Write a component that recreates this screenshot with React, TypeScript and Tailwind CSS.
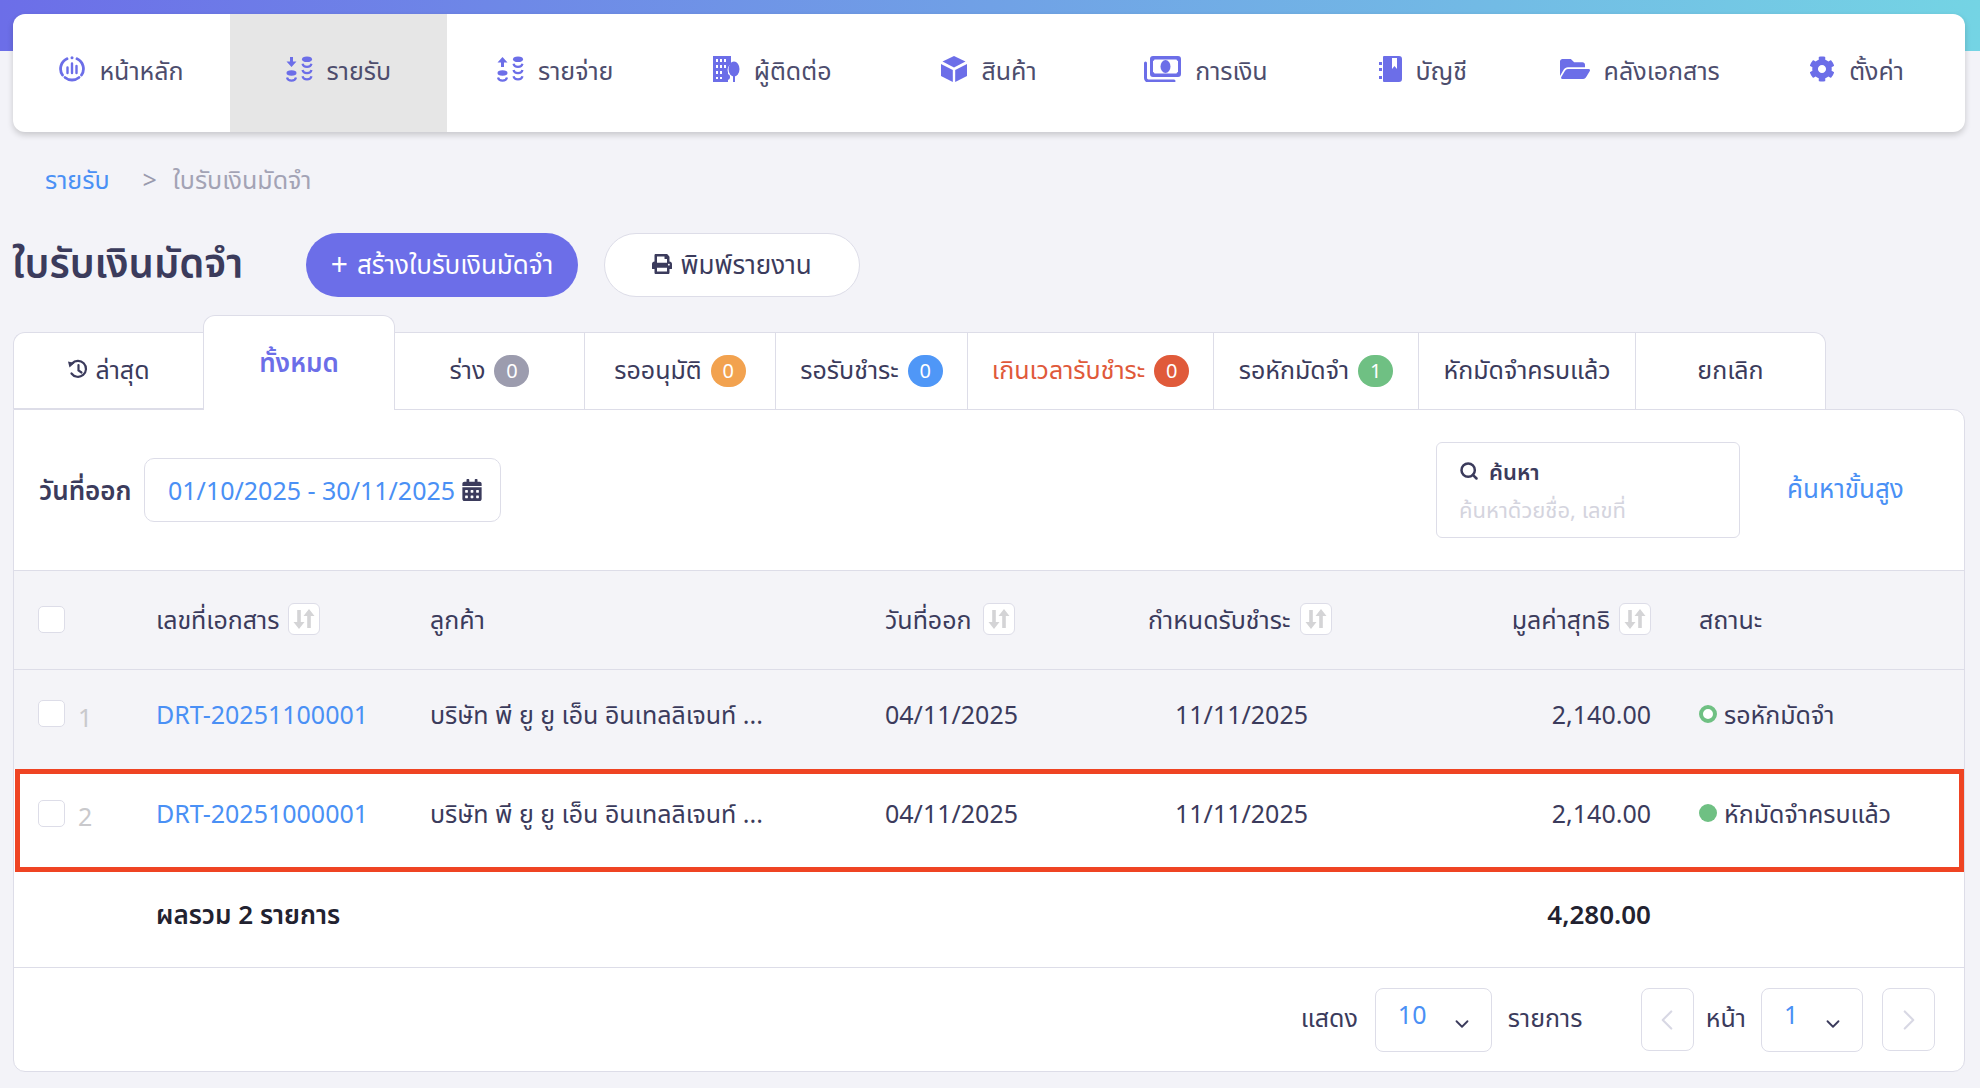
import React from "react";
import { FaFolderOpen, FaCog, FaPrint, FaCalendarAlt } from "react-icons/fa";
import { Search, ChevronDown, ChevronLeft, ChevronRight } from "lucide-react";

const FONT = "font-['Noto_Sans','Noto_Sans_Thai',sans-serif]";

function HomeIcon() {
  return (
    <svg width="26" height="26" viewBox="0 0 26 26" fill="none">
      <path d="M8 2.800A11 11 0 0 0 3.500 19" stroke="#6c6ee8" strokeWidth="2.800" strokeLinecap="round" />
      <path d="M18 2.800A11 11 0 0 1 22.500 19" stroke="#6c6ee8" strokeWidth="2.800" strokeLinecap="round" />
      <path d="M6 21.500A11 11 0 0 0 20 21.500" stroke="#6c6ee8" strokeWidth="2.800" strokeLinecap="round" />
      <circle cx="13" cy="1.800" r="1.500" fill="#6c6ee8" />
      <path d="M8.500 11.500v5.500M13 7.500v9.500M17.500 10v7" stroke="#6c6ee8" strokeWidth="2.400" strokeLinecap="round" />
    </svg>
  );
}
function Coins({ up }: { up?: boolean }) {
  const arc = (x: number, y: number) => (
    <path key={`${x}-${y}`} d={`M${x - 4.5} ${y}c1 4.200 8 4.200 9 0`} stroke="#6c6ee8" strokeWidth="2.200" fill="none" />
  );
  return (
    <svg width="27" height="26" viewBox="0 0 27 26">
      {up ? <path d="M5.500 1l5 5.500H7V11H4V6.500H.5z" fill="#6c6ee8" /> : <path d="M5.500 11L.5 5.500H4V1h3v4.500h3.500z" fill="#6c6ee8" />}
      <ellipse cx="5.500" cy="17" rx="5" ry="2.800" fill="#6c6ee8" />
      {arc(5.5, 21.5)}
      <ellipse cx="21" cy="3.200" rx="5" ry="2.800" fill="#6c6ee8" />
      {arc(21, 7.8)}
      {arc(21, 14)}
      {arc(21, 20.3)}
    </svg>
  );
}
function CubeIcon() {
  return (
    <svg width="26" height="26" viewBox="0 0 26 26" fill="#6c6ee8">
      <path d="M13 0l11.500 5.500L13 11.500 1.500 5.500z" />
      <path d="M0 8l11.800 6v12L0 20z" />
      <path d="M26 8l-11.800 6v12L26 20z" />
    </svg>
  );
}
function ContactIcon() {
  return (
    <svg width="27" height="26" viewBox="0 0 27 26">
      <path fillRule="evenodd" d="M0 0h18v8a7 7 0 0 0-3 8.500V26H0zM3 3v3h2V3zm4 0v3h2V3zm4 0v3h2V3zM3 9v3h2V9zm4 0v3h2V9zm4 0v3h2V9zM3 15v3h2v-3zm4 0v3h2v-3zM3 21v2h2v-2zm4 0v2h2v-2z" fill="#6c6ee8" />
      <ellipse cx="21" cy="13" rx="5.500" ry="7.500" fill="#6c6ee8" />
      <rect x="20" y="18" width="2" height="8" fill="#6c6ee8" />
      <circle cx="14" cy="21" r="3" fill="#6c6ee8" />
      <rect x="13.300" y="22" width="1.400" height="4" fill="#6c6ee8" />
    </svg>
  );
}
function MoneyIcon() {
  return (
    <svg width="37" height="26" viewBox="0 0 37 26">
      <path d="M1.500 7v15a3 3 0 0 0 3 3H30" stroke="#6c6ee8" strokeWidth="3" fill="none" strokeLinecap="round" />
      <path fillRule="evenodd" d="M9 0h25a3 3 0 0 1 3 3v15a3 3 0 0 1-3 3H9a3 3 0 0 1-3-3V3a3 3 0 0 1 3-3zm1.500 3.500a2 2 0 0 1-1.500 1.500v11a2 2 0 0 1 1.500 1.500H32.500A2 2 0 0 1 34 16V5a2 2 0 0 1-1.500-1.500z" fill="#6c6ee8" />
      <ellipse cx="21.500" cy="10.500" rx="5" ry="6.500" fill="#6c6ee8" />
    </svg>
  );
}
function BookIcon() {
  return (
    <svg width="23" height="26" viewBox="0 0 23 26">
      <path fillRule="evenodd" d="M5 0h15a3 3 0 0 1 3 3v20a3 3 0 0 1-3 3H5a1 1 0 0 1-1-1V1a1 1 0 0 1 1-1zm8 2v11l2.500-3 2.500 3V2z" fill="#6c6ee8" />
      <path d="M0 6h3v3H0zM0 12h3v3H0zM0 20h3v3H0z" fill="#6c6ee8" />
    </svg>
  );
}
function HistoryIcon() {
  return (
    <svg width="22" height="22" viewBox="0 0 22 22" fill="none" stroke="#3b3b5c" strokeWidth="2.200">
      <path d="M5 5.500A8 8 0 1 1 4.500 15.500" strokeLinecap="round" />
      <path d="M1 3.500l6.500 1.500-5 4.500z" fill="#3b3b5c" stroke="none" />
      <path d="M11.500 7v5.500l3 2" strokeLinecap="round" />
    </svg>
  );
}
function Sort() {
  return (
    <span className="flex h-[32px] w-[32px] shrink-0 items-center justify-center rounded-[6px] border border-[#dddde8] bg-white">
      <svg width="22" height="22" viewBox="0 0 22 22" fill="#d4d4d6">
        <path d="M6 21l-5.500-7h3.700V2h3.600v12h3.700z" />
        <path d="M16 1l5.500 7h-3.700v12h-3.600V8h-3.700z" />
      </svg>
    </span>
  );
}
function Check() {
  return <span className="block h-[27px] w-[27px] shrink-0 rounded-[5px] border border-[#dddde8] bg-white" />;
}
function Badge({ n, c }: { n: string; c: string }) {
  return <span className={`flex h-[32px] w-[35px] shrink-0 items-center justify-center rounded-full text-[20px] leading-none text-white ${c}`}>{n}</span>;
}

const navItems: [React.ReactNode, string, number][] = [
  [<HomeIcon />, "หน้าหลัก", 0],
  [<Coins />, "รายรับ", 1],
  [<Coins up />, "รายจ่าย", 0],
  [<ContactIcon />, "ผู้ติดต่อ", 0],
  [<CubeIcon />, "สินค้า", 0],
  [<MoneyIcon />, "การเงิน", 0],
  [<BookIcon />, "บัญชี", 0],
  [<FaFolderOpen size={30} color="#6c6ee8" />, "คลังเอกสาร", 0],
  [<FaCog size={26} color="#6c6ee8" />, "ตั้งค่า", 0],
];

const tabs: { label: React.ReactNode; w: string; c?: string; n?: string }[] = [
  { label: "ร่าง", w: "w-[190px]", c: "bg-[#9c9cae]", n: "0" },
  { label: "รออนุมัติ", w: "w-[191px]", c: "bg-[#f2a24f]", n: "0" },
  { label: "รอรับชำระ", w: "w-[192px]", c: "bg-[#4f97f7]", n: "0" },
  { label: <span className="text-[#e0593a]">เกินเวลารับชำระ</span>, w: "w-[246px]", c: "bg-[#e05a3a]", n: "0" },
  { label: "รอหักมัดจำ", w: "w-[205px]", c: "bg-[#6fc083]", n: "1" },
  { label: "หักมัดจำครบแล้ว", w: "w-[217px]" },
  { label: "ยกเลิก", w: "w-[190px]" },
];

const cols = "grid grid-cols-[142px_274px_455px_263px_300px_203px_1fr] items-center";

function Row({ n, doc, status, hollow }: { n: string; doc: string; status: string; hollow?: boolean }) {
  return (
    <div className={`${cols} h-full`}>
      <div className="flex items-center pl-[24px]">
        <Check />
        <span className="ml-[13px] mt-[6px] text-[25px] text-[#c9c9cc]">{n}</span>
      </div>
      <div className="text-[#4a90f5]">{doc}</div>
      <div>บริษัท พี ยู ยู เอ็น อินเทลลิเจนท์ ...</div>
      <div>04/11/2025</div>
      <div className="pl-[27px]">11/11/2025</div>
      <div className="text-right">2,140.00</div>
      <div className="flex items-center gap-[7px] pl-[48px]">
        <span className={`h-[18px] w-[18px] shrink-0 rounded-full ${hollow ? "border-[4px] border-[#6fc083] bg-white" : "bg-[#6fc083]"}`} />
        {status}
      </div>
    </div>
  );
}

export default function App() {
  return (
    <div className={`${FONT} flex min-h-[1088px] flex-col bg-[#f3f3f8] bg-[linear-gradient(90deg,#6c6ee8,#74d4e4)] bg-[length:100%_51px] bg-no-repeat text-[25px] leading-[32px] text-[#3b3b5c]`}>
      <div className="pl-[13px] pr-[15px] pt-[14px]">
        <nav className="flex h-[118px] overflow-hidden rounded-[12px] bg-white text-[#4d4d6d] shadow-[0_3px_6px_rgba(0,0,0,0.18)]">
          {navItems.map(([icon, label, active], i) => (
            <div key={i} className={`flex flex-1 items-start justify-center gap-[14px] pt-[42px] ${active ? "bg-[#e6e6e6]" : ""}`}>
              <span className="flex h-[26px] shrink-0 items-center">{icon}</span>
              <span className="-mt-[2px]">{label}</span>
            </div>
          ))}
        </nav>
      </div>

      <div className="flex items-center pl-[45px] pt-[31px]">
        <span className="text-[#4a90f5]">รายรับ</span>
        <span className="ml-[33px] text-[#9a9aae]">&gt;</span>
        <span className="ml-[16px] text-[#a3a3b5]">ใบรับเงินมัดจำ</span>
      </div>

      <div className="flex items-center pl-[12px] pt-[38px]">
        <h1 className="w-[294px] pb-[4px] text-[40px] font-semibold leading-[60px]">ใบรับเงินมัดจำ</h1>
        <button className="flex h-[64px] w-[272px] items-center justify-center gap-[9px] rounded-full bg-[#6c6ee8] pb-[3px] text-[26px] text-white">
          <span className="text-[30px]">+</span>สร้างใบรับเงินมัดจำ
        </button>
        <button className="ml-[26px] flex h-[64px] w-[256px] items-center justify-center gap-[8px] rounded-full border border-[#dddde8] bg-white pb-[3px] text-[26px]">
          <FaPrint size={20} />พิมพ์รายงาน
        </button>
      </div>

      <div className="flex items-end pl-[13px] pt-[18px]">
        <div className="flex h-[77px] w-[190px] items-center justify-center gap-[6px] rounded-tl-[12px] border border-r-0 border-[#dddde8] bg-white pb-[4px]">
          <HistoryIcon />ล่าสุด
        </div>
        <div className="relative z-10 -mb-[1px] flex h-[95px] w-[192px] justify-center rounded-t-[12px] border border-b-0 border-[#dddde8] bg-white pt-[30px] text-[26px] font-semibold text-[#6c6ee8]">
          ทั้งหมด
        </div>
        {tabs.map(({ label, w, c, n }, i) => (
          <div key={i} className={`flex h-[77px] ${w} items-center justify-center gap-[9px] border-t border-r border-[#dddde8] bg-white ${i === tabs.length - 1 ? "rounded-tr-[12px]" : ""}`}>
            <span className="pb-[5px]">{label}</span>
            {c && n && <Badge n={n} c={c} />}
          </div>
        ))}
      </div>

      <main className="mr-[15px] ml-[13px] flex flex-col overflow-hidden rounded-b-[12px] rounded-tr-[12px] border border-[#dddde8] bg-white">
        <div className="flex h-[161px] items-center border-b border-[#dddde8] pl-[25px]">
          <span className="w-[105px] text-[26px] font-semibold">วันที่ออก</span>
          <div className="flex h-[64px] w-[357px] items-center gap-[6px] rounded-[10px] border border-[#dddde8] pl-[23px] text-[#4a90f5]">
            01/10/2025 - 30/11/2025
            <FaCalendarAlt size={22} color="#3b3b5c" />
          </div>
          <div className="ml-auto flex h-[96px] w-[304px] flex-col rounded-[6px] border border-[#dddde8] pl-[22px] pt-[12px]">
            <div className="flex items-center gap-[10px] text-[22px] font-semibold"><Search size={20} strokeWidth={3} />ค้นหา</div>
            <div className="mt-[6px] text-[22px] text-[#d4d4de]">ค้นหาด้วยชื่อ, เลขที่</div>
          </div>
          <span className="ml-[47px] mr-[62px] -mt-[4px] w-[115px] whitespace-nowrap text-right text-[26px] text-[#4a90f5]">ค้นหาขั้นสูง</span>
        </div>

        <div className={`${cols} h-[99px] border-b border-[#dddde8] bg-[#f4f4f8] pb-[2px]`}>
          <div className="pl-[24px]"><Check /></div>
          <div className="flex items-center gap-[9px]">เลขที่เอกสาร<Sort /></div>
          <div>ลูกค้า</div>
          <div className="flex items-center gap-[11px]">วันที่ออก<Sort /></div>
          <div className="flex items-center gap-[10px]">กำหนดรับชำระ<Sort /></div>
          <div className="flex items-center justify-end gap-[9px]">มูลค่าสุทธิ<Sort /></div>
          <div className="pl-[48px]">สถานะ</div>
        </div>

        <div className="h-[99px] bg-[#f4f4f8] pb-[12px]">
          <Row n="1" doc="DRT-20251100001" status="รอหักมัดจำ" hollow />
        </div>
        <div className="ml-[1px] h-[103px] border-[5px] border-[#ef4423] bg-white pb-[15px] [&>div]:-mr-[5px] [&>div]:-ml-[6px]">
          <Row n="2" doc="DRT-20251000001" status="หักมัดจำครบแล้ว" />
        </div>

        <div className={`${cols} h-[96px] border-b border-[#dddde8] pb-[12px] text-[26px] font-semibold text-[#222230]`}>
          <div />
          <div className="col-span-2">ผลรวม 2 รายการ</div>
          <div />
          <div />
          <div className="text-right">4,280.00</div>
          <div />
        </div>

        <div className="flex h-[103px] items-center justify-end pr-[29px]">
          <span className="pb-[5px]">แสดง</span>
          <div className="ml-[17px] flex h-[64px] w-[117px] items-start justify-between rounded-[8px] border border-[#dddde8] pl-[22px] pr-[18px] pt-[9px] text-[#4a90f5]">
            10<ChevronDown size={22} color="#3b3b5c" className="mt-[15px]" />
          </div>
          <span className="ml-[16px] w-[133px] pb-[5px]">รายการ</span>
          <div className="flex h-[63px] w-[53px] items-center justify-center rounded-[8px] border border-[#dddde8]"><ChevronLeft size={34} strokeWidth={1.5} color="#d8d8e4" /></div>
          <span className="ml-[12px] mr-[15px] pb-[5px]">หน้า</span>
          <div className="flex h-[64px] w-[102px] items-start justify-between rounded-[8px] border border-[#dddde8] pl-[22px] pr-[18px] pt-[9px] text-[#4a90f5]">
            1<ChevronDown size={22} color="#3b3b5c" className="mt-[15px]" />
          </div>
          <div className="ml-[19px] flex h-[63px] w-[53px] items-center justify-center rounded-[8px] border border-[#dddde8]"><ChevronRight size={34} strokeWidth={1.5} color="#d8d8e4" /></div>
        </div>
      </main>
    </div>
  );
}
